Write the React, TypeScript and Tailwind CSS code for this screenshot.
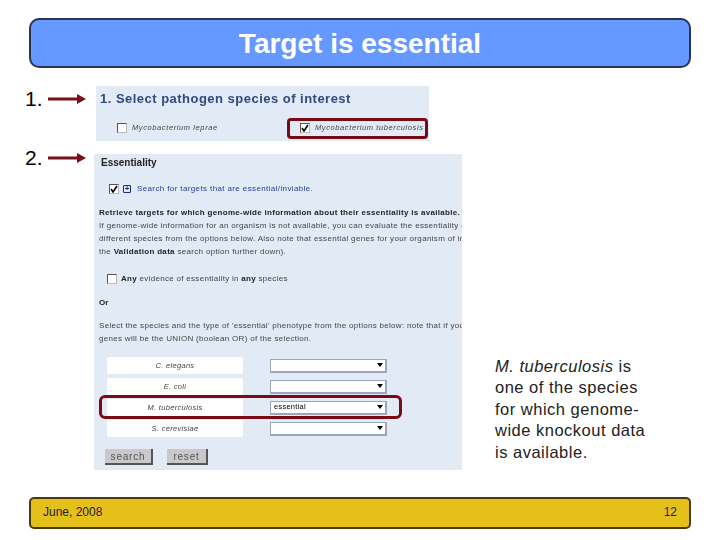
const sans = "font-['Liberation_Sans',Arial,sans-serif]";

const Arrow = () => (
  <svg width="38" height="10" viewBox="0 0 38 10" className="ml-[8px] shrink-0">
    <path d="M0 3.4H29V0L38 5L29 10V6.6H0Z" fill="#7a1016" />
  </svg>
);

const Checkbox = ({ checked = false }: { checked?: boolean }) => (
  <span className="flex h-[10px] w-[10px] shrink-0 items-center justify-center border border-t-[#555] border-l-[#555] border-r-[#bbb] border-b-[#bbb] bg-white">
    {checked && (
      <svg width="8" height="8" viewBox="0 0 8 8">
        <path d="M1 4L3 7L7 1" fill="none" stroke="#000" strokeWidth="1.6" />
      </svg>
    )}
  </span>
);

const Dropdown = ({ value = "" }: { value?: string }) => (
  <div className="flex h-[14px] w-[117px] items-center justify-between border border-[#9aa7bd] border-r-2 border-b-2 bg-white pl-[3px] pr-[2px]">
    <span className="text-[7.5px] leading-none tracking-[0.25px] text-black">{value}</span>
    <span className="h-0 w-0 border-x-[3px] border-t-[4px] border-x-transparent border-t-black" />
  </div>
);

const species = [
  { name: "C. elegans", value: "" },
  { name: "E. coli", value: "" },
  { name: "M. tuberculosis", value: "essential" },
  { name: "S. cerevisiae", value: "" },
];

const Button = ({ label, className }: { label: string; className: string }) => (
  <div
    className={`flex h-[16px] items-center justify-center border-r-2 border-b-2 border-[#555] bg-[#c9c9c9] text-[10px] tracking-[0.8px] text-[#555] ${className}`}
  >
    {label}
  </div>
);

export default function App() {
  return (
    <div className={`flex h-[540px] w-[720px] flex-col overflow-hidden bg-white pt-[18px] pb-[11px] ${sans}`}>
      <div className="mx-[29px] flex h-[50px] items-center justify-center rounded-[10px] border-2 border-[#2b3550] bg-[#6699ff] pt-[2px] text-[28px] font-bold text-white">
        Target is essential
      </div>

      <div className="mt-[18px] flex pl-[25px]">
        <div className="flex h-[26px] w-[71px] shrink-0 items-center text-[21px] text-black">
          <span className="w-[15px]">1.</span>
          <Arrow />
        </div>
        <div className="relative h-[55px] w-[333px] bg-[#e2eaf6]">
          <div className="pt-[6px] pl-[4px] text-[13px] font-bold leading-[13px] tracking-[0.48px] text-[#2f4a80] blur-[0.25px]">
            1. Select pathogen species of interest
          </div>
          <div className="mt-[17px] flex items-center pl-[21px] text-[7.5px] italic tracking-[0.6px] text-[#444] blur-[0.3px]">
            <div className="flex w-[183px] items-center gap-[5px]">
              <Checkbox />
              <span>Mycobacterium leprae</span>
            </div>
            <div className="flex items-center gap-[5px]">
              <Checkbox checked />
              <span className="whitespace-nowrap">Mycobacterium tuberculosis</span>
            </div>
          </div>
          <div className="absolute top-[32px] left-[191px] h-[21px] w-[141px] rounded-[4px] border-[3px] border-[#7a0a14]" />
        </div>
      </div>

      <div className="mt-[5px] flex pl-[25px]">
        <div className="flex h-[24px] w-[69px] shrink-0 items-center text-[21px] text-black">
          <span className="w-[15px]">2.</span>
          <Arrow />
        </div>
        <div className="relative mt-[8px] h-[316px] w-[368px] overflow-hidden whitespace-nowrap bg-[#e2eaf6] text-[8px] leading-[13px] text-[#444]">
          <div className="blur-[0.3px]">
            <div className="pt-[3px] pl-[7px] text-[10px] font-bold leading-[12px] text-[#222]">Essentiality</div>
            <div className="mt-[13px] flex items-center pl-[15px]">
              <Checkbox checked />
              <span className="ml-[4px] flex h-[8px] w-[8px] items-center justify-center rounded-[1px] border border-[#22277a] text-[8px] font-bold leading-none text-[#22277a]">
                +
              </span>
              <span className="ml-[6px] tracking-[0.38px] text-[#2a3a9a]">Search for targets that are essential/inviable.</span>
            </div>
            <div className="mt-[11px] pl-[5px]">
              <div className="font-bold tracking-[0.3px] text-[#222]">
                Retrieve targets for which genome-wide information about their essentiality is available.
              </div>
              <div className="tracking-[0.32px]">
                If genome-wide information for an organism is not available, you can evaluate the essentiality of
              </div>
              <div className="tracking-[0.34px]">
                different species from the options below. Also note that essential genes for your organism of interest
              </div>
              <div className="tracking-[0.32px]">
                the <b className="text-[#222]">Validation data</b> search option further down).
              </div>
            </div>
            <div className="mt-[14px] flex items-center pl-[13px] tracking-[0.3px]">
              <Checkbox />
              <span className="ml-[4px]">
                <b className="text-[#222]">Any</b> evidence of essentiality in <b className="text-[#222]">any</b> species
              </span>
            </div>
            <div className="mt-[11px] pl-[5px] font-bold text-[#222]">Or</div>
            <div className="mt-[10px] pl-[5px] tracking-[0.3px]">
              <div>Select the species and the type of 'essential' phenotype from the options below: note that if you</div>
              <div>genes will be the UNION (boolean OR) of the selection.</div>
            </div>

            <div className="mt-[12px] flex flex-col gap-[4px] pl-[13px]">
              {species.map((row) => (
                <div key={row.name} className="flex h-[17px] items-center">
                  <div className="flex h-[17px] w-[136px] items-center justify-center rounded-[2px] bg-white text-[7.5px] italic tracking-[0.3px]">
                    {row.name}
                  </div>
                  <div className="ml-[27px]">
                    <Dropdown value={row.value} />
                  </div>
                </div>
              ))}
            </div>

            <div className="mt-[12px] flex gap-[14px] pl-[11px]">
              <Button label="search" className="w-[48px]" />
              <Button label="reset" className="w-[41px]" />
            </div>
          </div>

          <div className="absolute top-[241px] left-[5px] h-[24px] w-[303px] rounded-[6px] border-[3px] border-[#7a0a14]" />
        </div>

        <div className="ml-[33px] self-end pb-[7px] text-[16.5px] leading-[21.5px] tracking-[0.5px] text-[#222]">
          <i>M. tuberculosis</i> is
          <br />
          one of the species
          <br />
          for which genome-
          <br />
          wide knockout data
          <br />
          is available.
        </div>
      </div>

      <div className="mx-[29px] mt-auto flex h-[32px] items-center justify-between rounded-[5px] border-2 border-[#4a3a10] bg-[#e6c01a] px-[12px] pb-[3px] text-[12px] text-[#222]">
        <span>June, 2008</span>
        <span>12</span>
      </div>
    </div>
  );
}
